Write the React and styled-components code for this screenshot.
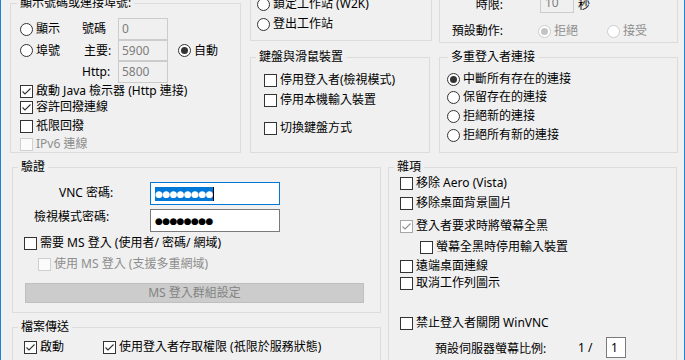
import React from 'react';
import styled, { createGlobalStyle } from 'styled-components';

const GlobalStyle = createGlobalStyle`
  html, body { margin: 0; padding: 0; background: #f0f0f0; }
  body {
    font-family: "Noto Sans", "Noto Sans CJK TC", sans-serif;
    font-size: 12px;
    color: #000;
  }
`;

const Window = styled.div`
  box-sizing: border-box;
  width: 685px;
  height: 360px;
  overflow: hidden;
  background: #f0f0f0;
  border-left: 1px solid #1883d7;
  border-right: 1px solid #1883d7;
  display: flex;
  flex-direction: column;
`;

const TopRow = styled.div`
  display: flex;
  align-items: flex-start;
  padding-left: 9px;
  height: 153px;
  flex: none;
`;

const BottomRow = styled.div`
  display: flex;
  align-items: flex-start;
  padding-left: 11px;
  gap: 7px;
  flex: none;
`;

const Column = styled.div`
  display: flex;
  flex-direction: column;
  flex: none;
  width: ${p => p.$w}px;
  margin-left: ${p => p.$gap || 0}px;
`;

const Group = styled.div`
  position: relative;
  box-sizing: border-box;
  flex: none;
  display: flex;
  flex-direction: column;
  align-items: flex-start;
  justify-content: ${p => (p.$end ? 'flex-end' : 'flex-start')};
  width: ${p => p.$w}px;
  height: ${p => p.$h}px;
  margin-top: ${p => p.$mt || 0}px;
  padding: ${p => p.$pad || '0'};
  border: 1px solid #dcdcdc;
  border-top: ${p => (p.$cut ? 'none' : '1px solid #dcdcdc')};
`;

const Legend = styled.span`
  position: absolute;
  top: -9px;
  left: ${p => p.$x}px;
  padding: 0 3px;
  line-height: 16px;
  background: #f0f0f0;
  white-space: nowrap;
`;

const Opt = styled.div`
  display: flex;
  align-items: center;
  flex: none;
  height: 16px;
  line-height: 16px;
  white-space: nowrap;
  width: ${p => (p.$w ? `${p.$w}px` : 'auto')};
  margin-left: ${p => p.$x || 0}px;
  margin-top: ${p => p.$mt || 0}px;
  color: ${p => (p.$disabled ? '#8d8d8d' : '#000')};
`;

const OptText = styled.span`
  margin-left: 3px;
`;

const CheckBox = styled.span`
  box-sizing: border-box;
  flex: none;
  width: 13px;
  height: 13px;
  display: inline-flex;
  align-items: center;
  justify-content: center;
  background: ${p => (p.$disabled ? '#fbfbfb' : '#fff')};
  border: 1px solid ${p => (p.$disabled ? '#d0d0d0' : p.$muted ? '#a6a6a6' : '#333')};
`;

const RadioCircle = styled.span`
  box-sizing: border-box;
  flex: none;
  width: 13px;
  height: 13px;
  border-radius: 50%;
  display: inline-flex;
  align-items: center;
  justify-content: center;
  background: #fff;
  border: 1px solid ${p => (p.$disabled ? '#cccccc' : '#333')};
`;

const RadioDot = styled.span`
  width: 7px;
  height: 7px;
  border-radius: 50%;
  background: ${p => (p.$disabled ? '#c4c4c4' : '#333')};
`;

const CheckMark = ({ muted }) => (
  <svg width="11" height="11" viewBox="0 0 11 11">
    <path d="M1.5 5.5 L4 8 L9.5 2.5" fill="none" stroke={muted ? '#8f8f8f' : '#333'} strokeWidth="1.1" />
  </svg>
);

function Choice({ radio, checked, disabled, muted, children, ...rest }) {
  return (
    <Opt $disabled={disabled} {...rest}>
      {radio ? (
        <RadioCircle $disabled={disabled}>{checked && <RadioDot $disabled={disabled} />}</RadioCircle>
      ) : (
        <CheckBox $disabled={disabled} $muted={muted}>{checked && <CheckMark muted={muted} />}</CheckBox>
      )}
      <OptText>{children}</OptText>
    </Opt>
  );
}

const TextBox = styled.div`
  box-sizing: border-box;
  flex: none;
  width: ${p => (p.$w ? `${p.$w}px` : '100%')};
  height: ${p => (p.$h ? `${p.$h}px` : '100%')};
  margin-left: ${p => p.$ml || 0}px;
  padding-left: ${p => (p.$pl ?? 3)}px;
  border: 1px solid ${p => (p.$disabled ? '#cccccc' : '#7a7a7a')};
  background: ${p => (p.$disabled ? '#f0f0f0' : '#fff')};
  color: ${p => (p.$disabled ? '#7d7d7d' : '#000')};
  display: flex;
  align-items: center;
  line-height: 16px;
`;

const PortGrid = styled.div`
  display: grid;
  grid-template-columns: 62px 36px 50px auto;
  grid-template-rows: 22px 21px 22px;
  align-items: center;
`;

const Blank = styled.span``;

const FieldLabel = styled.span`
  margin-left: ${p => p.$x || 0}px;
  line-height: 16px;
  white-space: nowrap;
`;

const QueryRow = styled.div`
  display: flex;
  flex: none;
  align-items: ${p => (p.$bottom ? 'flex-end' : 'center')};
  margin-top: ${p => p.$mt || 0}px;
`;

const QueryLabel = styled.span`
  width: 52px;
  flex: none;
  text-align: right;
  line-height: 16px;
  white-space: nowrap;
`;

const Unit = styled.span`
  margin-left: 4px;
  line-height: 16px;
`;

const PassGrid = styled.div`
  display: grid;
  grid-template-columns: 137px 130px;
  grid-template-rows: 23px 23px;
  row-gap: 4px;
  margin-top: 14px;
`;

const PassLabel = styled.span`
  align-self: start;
  margin-left: ${p => p.$x}px;
  margin-top: ${p => p.$y || 0}px;
  line-height: 16px;
  white-space: nowrap;
`;

const PassBox = styled.div`
  box-sizing: border-box;
  height: 23px;
  width: 130px;
  background: #fff;
  border: 1px solid ${p => (p.$focused ? '#0078d7' : '#7a7a7a')};
  display: flex;
  align-items: center;
  padding-left: 4px;
`;

const Dots = styled.span`
  font-family: "DejaVu Sans", sans-serif;
  font-size: 9px;
  line-height: 14px;
  height: 14px;
  letter-spacing: -0.65px;
  padding-right: 0.65px;
  background: ${p => (p.$selected ? '#0078d7' : 'transparent')};
  color: ${p => (p.$selected ? '#fff' : '#000')};
`;

const Caret = styled.span`
  width: 1px;
  height: 14px;
  background: #000;
`;

const PushButton = styled.div`
  box-sizing: border-box;
  width: 339px;
  height: 20px;
  margin: 11px 0 0 12px;
  background: #cccccc;
  border: 1px solid #bfbfbf;
  color: #838383;
  display: flex;
  align-items: center;
  justify-content: center;
  line-height: 16px;
`;

const TransferRow = styled.div`
  display: flex;
`;

const RatioRow = styled.div`
  display: flex;
  align-items: center;
  flex: none;
  height: 21px;
  margin: 6px 0 0 35px;
`;

const RatioLabel = styled.span`
  width: 143px;
  flex: none;
  white-space: nowrap;
`;

const RatioSep = styled.span`
  width: 28px;
  flex: none;
  white-space: nowrap;
`;

export default function App() {
  return (
    <>
      <GlobalStyle />
      <Window>
        <TopRow>
          <Column $w={231}>
            <Group $w={231} $h={150} $mt={3} $pad="14px 0 0 9px">
              <Legend $x={6}>顯示號碼或連接埠號:</Legend>
              <PortGrid>
                <Choice radio>顯示</Choice>
                <FieldLabel>號碼</FieldLabel>
                <TextBox $disabled $h={22}>0</TextBox>
                <Blank />
                <Choice radio>埠號</Choice>
                <FieldLabel $x={2}>主要:</FieldLabel>
                <TextBox $disabled $h={21}>5900</TextBox>
                <Choice radio checked $x={10}>自動</Choice>
                <Blank />
                <FieldLabel>Http:</FieldLabel>
                <TextBox $disabled $h={22}>5800</TextBox>
                <Blank />
              </PortGrid>
              <Choice checked>啟動 Java 檢示器 (Http 連接)</Choice>
              <Choice checked>容許回撥連線</Choice>
              <Choice $mt={3}>祇限回撥</Choice>
              <Choice disabled $mt={2}>IPv6 連線</Choice>
            </Group>
          </Column>

          <Column $w={182} $gap={9}>
            <Group $cut $end $w={182} $h={41} $pad="0 0 8px 6px">
              <Choice radio>鎖定工作站 (W2K)</Choice>
              <Choice radio $mt={4}>登出工作站</Choice>
            </Group>
            <Group $w={180} $h={96} $mt={16} $pad="14px 0 0 13px">
              <Legend $x={5}>鍵盤與滑鼠裝置</Legend>
              <Choice>停用登入者(檢視模式)</Choice>
              <Choice $mt={4}>停用本機輸入裝置</Choice>
              <Choice $mt={12}>切換鍵盤方式</Choice>
            </Group>
          </Column>

          <Column $w={239} $gap={7}>
            <Group $cut $end $w={239} $h={43} $pad="0 0 3px 11px">
              <QueryRow $bottom>
                <QueryLabel>時限:</QueryLabel>
                <TextBox $disabled $w={34} $h={21} $ml={37} $pl={4}>10</TextBox>
                <Unit>秒</Unit>
              </QueryRow>
              <QueryRow $mt={10}>
                <QueryLabel>預設動作:</QueryLabel>
                <Choice radio checked disabled $x={35} $w={69}>拒絕</Choice>
                <Choice radio disabled>接受</Choice>
              </QueryRow>
            </Group>
            <Group $w={239} $h={96} $mt={14} $pad="13px 0 0 7px">
              <Legend $x={8}>多重登入者連接</Legend>
              <Choice radio checked>中斷所有存在的連接</Choice>
              <Choice radio $mt={2}>保留存在的連接</Choice>
              <Choice radio $mt={3}>拒絕新的連接</Choice>
              <Choice radio $mt={3}>拒絕所有新的連接</Choice>
            </Group>
          </Column>
        </TopRow>

        <BottomRow>
          <Column $w={369}>
            <Group $w={369} $h={146} $mt={14}>
              <Legend $x={5}>驗證</Legend>
              <PassGrid>
                <PassLabel $x={46} $y={3}>VNC 密碼:</PassLabel>
                <PassBox $focused>
                  <Dots $selected>●●●●●●●●</Dots>
                  <Caret />
                </PassBox>
                <PassLabel $x={21}>檢視模式密碼:</PassLabel>
                <PassBox>
                  <Dots>●●●●●●●●</Dots>
                </PassBox>
              </PassGrid>
              <Choice $x={11} $mt={3}>需要 MS 登入 (使用者/ 密碼/ 網域)</Choice>
              <Choice disabled $x={25} $mt={5}>使用 MS 登入 (支援多重網域)</Choice>
              <PushButton>MS 登入群組設定</PushButton>
            </Group>
            <Group $w={369} $h={60} $mt={14} $pad="11px 0 0 11px">
              <Legend $x={5}>檔案傳送</Legend>
              <TransferRow>
                <Choice checked $w={79}>啟動</Choice>
                <Choice checked>使用登入者存取權限 (祇限於服務狀態)</Choice>
              </TransferRow>
            </Group>
          </Column>

          <Group $w={289} $h={210} $mt={14} $pad="7px 0 0 11px">
            <Legend $x={5}>雜項</Legend>
            <Choice>移除 Aero (Vista)</Choice>
            <Choice $mt={4}>移除桌面背景圖片</Choice>
            <Choice checked muted $mt={7}>登入者要求時將螢幕全黑</Choice>
            <Choice $x={20} $mt={5}>螢幕全黑時停用輸入裝置</Choice>
            <Choice $mt={3}>遠端桌面連線</Choice>
            <Choice $mt={1}>取消工作列圖示</Choice>
            <Choice $mt={24}>禁止登入者關閉 WinVNC</Choice>
            <RatioRow>
              <RatioLabel>預設伺服器螢幕比例:</RatioLabel>
              <RatioSep>1 /</RatioSep>
              <TextBox $w={20} $h={21} $pl={4}>1</TextBox>
            </RatioRow>
          </Group>
        </BottomRow>
      </Window>
    </>
  );
}
